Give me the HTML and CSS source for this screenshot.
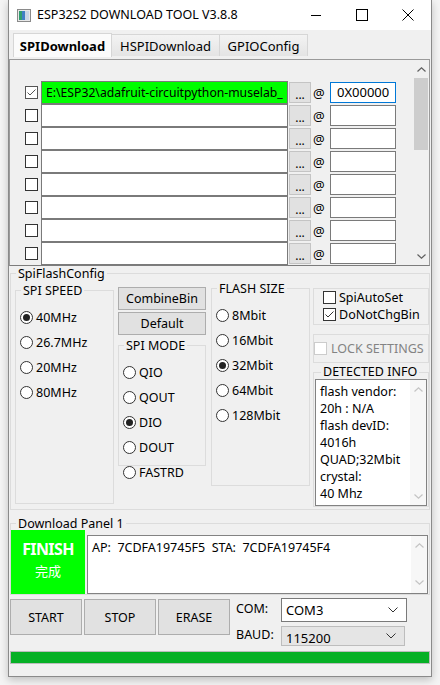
FILE: index.html
```html
<!DOCTYPE html>
<html>
<head>
<meta charset="utf-8">
<link rel="stylesheet" href="styles.css">
</head>
<body>
<div class="window">
  <div class="titlebar">
    <svg class="appicon" width="14" height="13" viewBox="0 0 14 13">
      <rect x="0.5" y="0.5" width="13" height="12" fill="#e8e8e8" stroke="#8a8a8a"/>
      <rect x="2" y="2" width="3" height="9" fill="#2f9e6e"/>
      <rect x="5" y="2" width="3" height="9" fill="#3f7fc4"/>
      <rect x="8" y="2" width="4" height="9" fill="#c9d6e6"/>
    </svg>
    <span class="title">ESP32S2 DOWNLOAD TOOL V3.8.8</span>
    <div class="winbtns">
      <div class="winbtn"><svg width="10" height="10" viewBox="0 0 10 10"><line x1="0" y1="5.5" x2="10" y2="5.5" stroke="#000"/></svg></div>
      <div class="winbtn"><svg width="12" height="12" viewBox="0 0 12 12"><rect x="0.5" y="0.5" width="11" height="11" fill="none" stroke="#000"/></svg></div>
      <div class="winbtn"><svg width="12" height="12" viewBox="0 0 12 12"><path d="M0.5 0.5 L11.5 11.5 M11.5 0.5 L0.5 11.5" stroke="#000" stroke-width="1"/></svg></div>
    </div>
  </div>

  <div class="client">
    <div class="tabs">
      <div class="tab sel">SPIDownload</div>
      <div class="tab t2">HSPIDownload</div>
      <div class="tab t3">GPIOConfig</div>
    </div>

    <div class="filelist">
      <div class="rows">
        <div class="row">
          <span class="cb"><svg width="11" height="11" viewBox="0 0 11 11"><polyline points="1.5,5.5 4,8 9.5,2.5" fill="none" stroke="#555" stroke-width="1"/></svg></span>
          <div class="field green">E:\ESP32\adafruit-circuitpython-muselab_</div>
          <div class="dots">...</div><span class="at">@</span>
          <div class="addr green focus">0X00000</div>
        </div>
        <div class="row"><span class="cb"></span><div class="field"></div><div class="dots">...</div><span class="at">@</span><div class="addr"></div></div>
        <div class="row"><span class="cb"></span><div class="field"></div><div class="dots">...</div><span class="at">@</span><div class="addr"></div></div>
        <div class="row"><span class="cb"></span><div class="field"></div><div class="dots">...</div><span class="at">@</span><div class="addr"></div></div>
        <div class="row"><span class="cb"></span><div class="field"></div><div class="dots">...</div><span class="at">@</span><div class="addr"></div></div>
        <div class="row"><span class="cb"></span><div class="field"></div><div class="dots">...</div><span class="at">@</span><div class="addr"></div></div>
        <div class="row"><span class="cb"></span><div class="field"></div><div class="dots">...</div><span class="at">@</span><div class="addr"></div></div>
        <div class="row"><span class="cb"></span><div class="field"></div><div class="dots">...</div><span class="at">@</span><div class="addr"></div></div>
      </div>
      <div class="vscroll">
        <div class="arrow"><svg width="9" height="5" viewBox="0 0 9 5"><polyline points="0.5,4.5 4.5,0.8 8.5,4.5" fill="none" stroke="#606060" stroke-width="1.2"/></svg></div>
        <div class="thumb"></div>
        <div class="track"></div>
        <div class="arrow"><svg width="9" height="5" viewBox="0 0 9 5"><polyline points="0.5,0.5 4.5,4.2 8.5,0.5" fill="none" stroke="#606060" stroke-width="1.2"/></svg></div>
      </div>
    </div>

    <fieldset class="grp spiconfig">
      <legend>SpiFlashConfig</legend>
      <div class="cfg">
        <fieldset class="grp speed">
          <legend>SPI SPEED</legend>
          <div class="radios">
            <div class="radio on"><span class="rb"></span>40MHz</div>
            <div class="radio"><span class="rb"></span>26.7MHz</div>
            <div class="radio"><span class="rb"></span>20MHz</div>
            <div class="radio"><span class="rb"></span>80MHz</div>
          </div>
        </fieldset>

        <div class="midcol">
          <div class="btn">CombineBin</div>
          <div class="btn b2">Default</div>
          <fieldset class="grp mode">
            <legend>SPI MODE</legend>
            <div class="radios">
              <div class="radio"><span class="rb"></span>QIO</div>
              <div class="radio"><span class="rb"></span>QOUT</div>
              <div class="radio on"><span class="rb"></span>DIO</div>
              <div class="radio"><span class="rb"></span>DOUT</div>
            </div>
          </fieldset>
          <div class="radio fastrd"><span class="rb"></span>FASTRD</div>
        </div>

        <fieldset class="grp flash">
          <legend>FLASH SIZE</legend>
          <div class="radios">
            <div class="radio"><span class="rb"></span>8Mbit</div>
            <div class="radio"><span class="rb"></span>16Mbit</div>
            <div class="radio on"><span class="rb"></span>32Mbit</div>
            <div class="radio"><span class="rb"></span>64Mbit</div>
            <div class="radio"><span class="rb"></span>128Mbit</div>
          </div>
        </fieldset>

        <div class="rightcol">
          <div class="box chkbox">
            <div class="check"><span class="cb"></span>SpiAutoSet</div>
            <div class="check"><span class="cb"><svg width="11" height="11" viewBox="0 0 11 11"><polyline points="1.5,5.5 4,8 9.5,2.5" fill="none" stroke="#333" stroke-width="1"/></svg></span>DoNotChgBin</div>
          </div>
          <div class="box lockbox">
            <div class="check dis"><span class="cb"></span>LOCK SETTINGS</div>
          </div>
          <fieldset class="grp detected">
            <legend>DETECTED INFO</legend>
            <div class="infobox">
              <div class="infotext">flash vendor:<br>20h : N/A<br>flash devID:<br>4016h<br>QUAD;32Mbit<br>crystal:<br>40 Mhz</div>
              <div class="lscroll">
                <svg width="9" height="5" viewBox="0 0 9 5"><polyline points="0.5,4.5 4.5,0.8 8.5,4.5" fill="none" stroke="#c4c4c4" stroke-width="1.2"/></svg>
                <svg width="9" height="5" viewBox="0 0 9 5"><polyline points="0.5,0.5 4.5,4.2 8.5,0.5" fill="none" stroke="#c4c4c4" stroke-width="1.2"/></svg>
              </div>
            </div>
          </fieldset>
        </div>
      </div>
    </fieldset>

    <fieldset class="grp dlpanel">
      <legend>Download Panel 1</legend>
      <div class="dlrow">
        <div class="finish"><div class="f1">FINISH</div><div class="f2">完成</div></div>
        <div class="log">
          <div class="logtext">AP:  7CDFA19745F5  STA:  7CDFA19745F4</div>
          <div class="lscroll">
            <svg width="9" height="5" viewBox="0 0 9 5"><polyline points="0.5,4.5 4.5,0.8 8.5,4.5" fill="none" stroke="#c4c4c4" stroke-width="1.2"/></svg>
            <svg width="9" height="5" viewBox="0 0 9 5"><polyline points="0.5,0.5 4.5,4.2 8.5,0.5" fill="none" stroke="#c4c4c4" stroke-width="1.2"/></svg>
          </div>
        </div>
      </div>
    </fieldset>

    <div class="ctrlrow">
      <div class="btn big">START</div>
      <div class="btn big">STOP</div>
      <div class="btn big">ERASE</div>
      <div class="ports">
        <span class="lbl l1">COM:</span>
        <div class="combo c1"><span>COM3</span><svg width="10" height="6" viewBox="0 0 10 6"><polyline points="0.5,0.5 5,5 9.5,0.5" fill="none" stroke="#333" stroke-width="1"/></svg></div>
        <span class="lbl l2">BAUD:</span>
        <div class="combo c2"><span>115200</span><svg width="10" height="6" viewBox="0 0 10 6"><polyline points="0.5,0.5 5,5 9.5,0.5" fill="none" stroke="#333" stroke-width="1"/></svg></div>
      </div>
    </div>

    <div class="progress"><div class="fill"></div></div>
  </div>
</div>
</body>
</html>
```

FILE: styles.css
```css
* { box-sizing: border-box; }

html, body {
  margin: 0;
  padding: 0;
}

body {
  width: 440px;
  height: 685px;
  overflow: hidden;
  background: #f4f4f4;
  font-family: "Noto Sans", "Noto Sans CJK SC", sans-serif;
  font-size: 12.5px;
  color: #000;
}

.window {
  margin-left: 8px;
  width: 424px;
  height: 677px;
  border: 1px solid #8a8a8a;
  border-top: 0;
  background: #f0f0f0;
  box-shadow: 0 3px 8px rgba(0, 0, 0, 0.22);
  display: flex;
  flex-direction: column;
}

/* title bar */
.titlebar {
  height: 30px;
  background: #fff;
  display: flex;
  align-items: center;
  flex-shrink: 0;
}
.appicon { margin-left: 8px; margin-top: 1px; }
.title {
  margin-left: 6px;
  font-size: 12.5px;
  line-height: 30px;
}
.winbtns { margin-left: auto; display: flex; height: 30px; }
.winbtn {
  width: 46px;
  height: 30px;
  display: flex;
  align-items: center;
  justify-content: center;
}

.client {
  flex: 1;
  display: flex;
  flex-direction: column;
}

/* tabs */
.tabs {
  height: 27px;
  display: flex;
  align-items: flex-end;
  padding-left: 4px;
  flex-shrink: 0;
}
.tab {
  height: 22px;
  margin-bottom: 1px;
  border: 1px solid #d6d6d6;
  border-bottom: 0;
  background: linear-gradient(#f3f3f3, #e4e4e4);
  display: flex;
  align-items: center;
  justify-content: center;
  font-size: 13px;
}
.tab.sel {
  width: 99px;
  height: 24px;
  margin-bottom: 0;
  background: #fbfbfb;
  font-weight: bold;
  position: relative;
  z-index: 1;
}
.tab.t2 { width: 108px; border-left: 0; }
.tab.t3 { width: 88px; border-left: 0; }

/* file list */
.filelist {
  margin-top: 2px;
  width: 421px;
  height: 207px;
  border: 1px solid #9a9a9a;
  border-bottom-color: #7c7c7c;
  display: flex;
  flex-shrink: 0;
}
.rows {
  flex: 1;
  padding: 21px 0 0 15px;
  overflow: hidden;
}
.row {
  height: 23px;
  display: flex;
  align-items: center;
}
.cb {
  width: 13px;
  height: 13px;
  border: 1px solid #333;
  background: #fff;
  display: inline-flex;
  align-items: center;
  justify-content: center;
  flex-shrink: 0;
}
.row .cb { margin-right: 3px; }
.row:first-child .cb { border-color: #555; }
.field {
  width: 247px;
  height: 23px;
  border: 1px solid #7a7a7a;
  background: #fff;
  overflow: hidden;
  white-space: nowrap;
  line-height: 21px;
  padding-left: 4px;
  font-size: 12.2px;
  flex-shrink: 0;
}
.green { background: #00ff00; }
.dots {
  width: 22px;
  height: 21px;
  margin-left: 1px;
  background: #e1e1e1;
  border: 1px solid #c4c4c4;
  display: flex;
  justify-content: center;
  align-items: flex-end;
  line-height: 15px;
  font-size: 12px;
  flex-shrink: 0;
}
.at {
  width: 19px;
  padding-left: 2px;
  font-size: 13px;
  flex-shrink: 0;
}
.addr {
  width: 66px;
  height: 21px;
  border: 1px solid #7a7a7a;
  background: #fff;
  line-height: 19px;
  padding-left: 6px;
  font-size: 13px;
  flex-shrink: 0;
}
.addr.focus { border-color: #0078d7; }

.vscroll {
  width: 16px;
  display: flex;
  flex-direction: column;
  background: #f0f0f0;
}
.vscroll .arrow {
  height: 18px;
  display: flex;
  align-items: center;
  justify-content: center;
}
.vscroll .thumb { height: 72px; background: #cdcdcd; margin: 0 1px; }
.vscroll .track { flex: 1; }

/* group boxes */
.grp {
  margin: 0;
  padding: 0;
  border: 1px solid #dcdcdc;
  min-width: 0;
}
.grp > legend {
  padding: 0 2px;
  margin-left: 5px;
  line-height: 15px;
  font-size: 12.5px;
}

.spiconfig {
  margin-left: 1px;
  width: 420px;
  height: 244px;
  flex-shrink: 0;
}
.cfg {
  display: flex;
  align-items: flex-start;
  padding-left: 4px;
}

.radios {
  display: flex;
  flex-direction: column;
  gap: 12px;
  padding: 13px 0 0 4px;
}
.radio {
  height: 13px;
  display: flex;
  align-items: center;
  line-height: 13px;
  white-space: nowrap;
}
.rb {
  width: 13px;
  height: 13px;
  border: 1px solid #333;
  border-radius: 50%;
  background: #fff;
  margin-right: 3px;
  display: inline-flex;
  align-items: center;
  justify-content: center;
  flex-shrink: 0;
}
.radio.on .rb::after {
  content: "";
  width: 7px;
  height: 7px;
  border-radius: 50%;
  background: #222;
}

.speed {
  margin-top: 2px;
  width: 99px;
  height: 221px;
}

.midcol {
  width: 88px;
  margin-left: 4px;
  margin-top: 6px;
  display: flex;
  flex-direction: column;
}
.btn {
  background: #e1e1e1;
  border: 1px solid #adadad;
  display: flex;
  align-items: center;
  justify-content: center;
  height: 23px;
}
.b2 { margin-top: 2px; }
.mode {
  margin-top: 3px;
  height: 128px;
}
.fastrd { margin-left: 5px; }

.flash {
  margin-left: 5px;
  width: 99px;
  height: 205px;
}

.rightcol {
  width: 116px;
  margin-left: 3px;
  display: flex;
  flex-direction: column;
}
.box { border: 1px solid #dcdcdc; }
.chkbox {
  margin-top: 7px;
  height: 37px;
  padding: 2px 0 0 9px;
  display: flex;
  flex-direction: column;
  gap: 4px;
}
.check {
  height: 13px;
  display: flex;
  align-items: center;
  line-height: 13px;
  white-space: nowrap;
}
.check .cb { margin-right: 3px; }
.lockbox {
  margin-top: 9px;
  height: 29px;
  display: flex;
  align-items: center;
}
.check.dis { color: #838383; }
.check.dis .cb { border-color: #cccccc; margin-right: 4px; }

.detected {
  margin-top: 2px;
  padding: 0 1px;
}
.detected > legend { margin-left: 6px; line-height: 14px; }
.infobox {
  height: 127px;
  border: 1px solid #828282;
  background: #fff;
  display: flex;
}
.infotext {
  flex: 1;
  padding: 3px 0 0 4px;
  line-height: 17px;
}
.lscroll {
  width: 16px;
  display: flex;
  flex-direction: column;
  justify-content: space-between;
  align-items: center;
  padding: 7px 0 6px;
  background: #f7f7f7;
}

/* download panel */
.dlpanel {
  margin-top: 6px;
  margin-left: 1px;
  width: 420px;
  flex-shrink: 0;
}
.dlrow {
  display: flex;
  align-items: flex-start;
  margin-top: -1px;
}
.finish {
  width: 74px;
  height: 64px;
  background: #00ff00;
  color: #fff;
  display: flex;
  flex-direction: column;
  align-items: center;
  padding-top: 9px;
}
.f1 { font-weight: bold; font-size: 16px; line-height: 21px; letter-spacing: -0.6px; }
.f2 { font-size: 13px; line-height: 18px; margin-top: 2px; }
.log {
  margin-left: 2px;
  margin-top: 5px;
  width: 341px;
  height: 59px;
  border: 1px solid #828282;
  background: #fff;
  display: flex;
}
.logtext {
  flex: 1;
  white-space: pre;
  padding: 3px 0 0 4px;
  line-height: 17px;
}
.log .lscroll { padding: 7px 0 8px; }

/* bottom controls */
.ctrlrow {
  margin-top: 3px;
  padding-left: 1px;
  display: flex;
  align-items: flex-start;
  flex-shrink: 0;
}
.btn.big {
  width: 72px;
  height: 36px;
  margin-top: 1px;
  margin-right: 2px;
}
.ports {
  margin-left: 4px;
  display: grid;
  grid-template-columns: 45px auto;
  grid-template-rows: 24px 20px;
  row-gap: 4px;
}
.lbl { line-height: 22px; }
.l2 { line-height: 17px; }
.combo {
  display: flex;
  align-items: center;
  justify-content: space-between;
  padding: 0 8px 0 4px;
  font-size: 13px;
}
.combo.c1 {
  width: 126px;
  border: 1px solid #7a7a7a;
  background: #fff;
}
.combo.c2 {
  width: 124px;
  border: 1px solid #bdbdbd;
  background: #e5e5e5;
  padding-top: 3px;
}
.combo.c2 svg { margin-top: -3px; }

.progress {
  margin-top: 5px;
  margin-left: 1px;
  width: 420px;
  height: 13px;
  border: 1px solid #bcbcbc;
  background: #e6e6e6;
  flex-shrink: 0;
}
.progress .fill { width: 100%; height: 100%; background: #06b025; }
```
